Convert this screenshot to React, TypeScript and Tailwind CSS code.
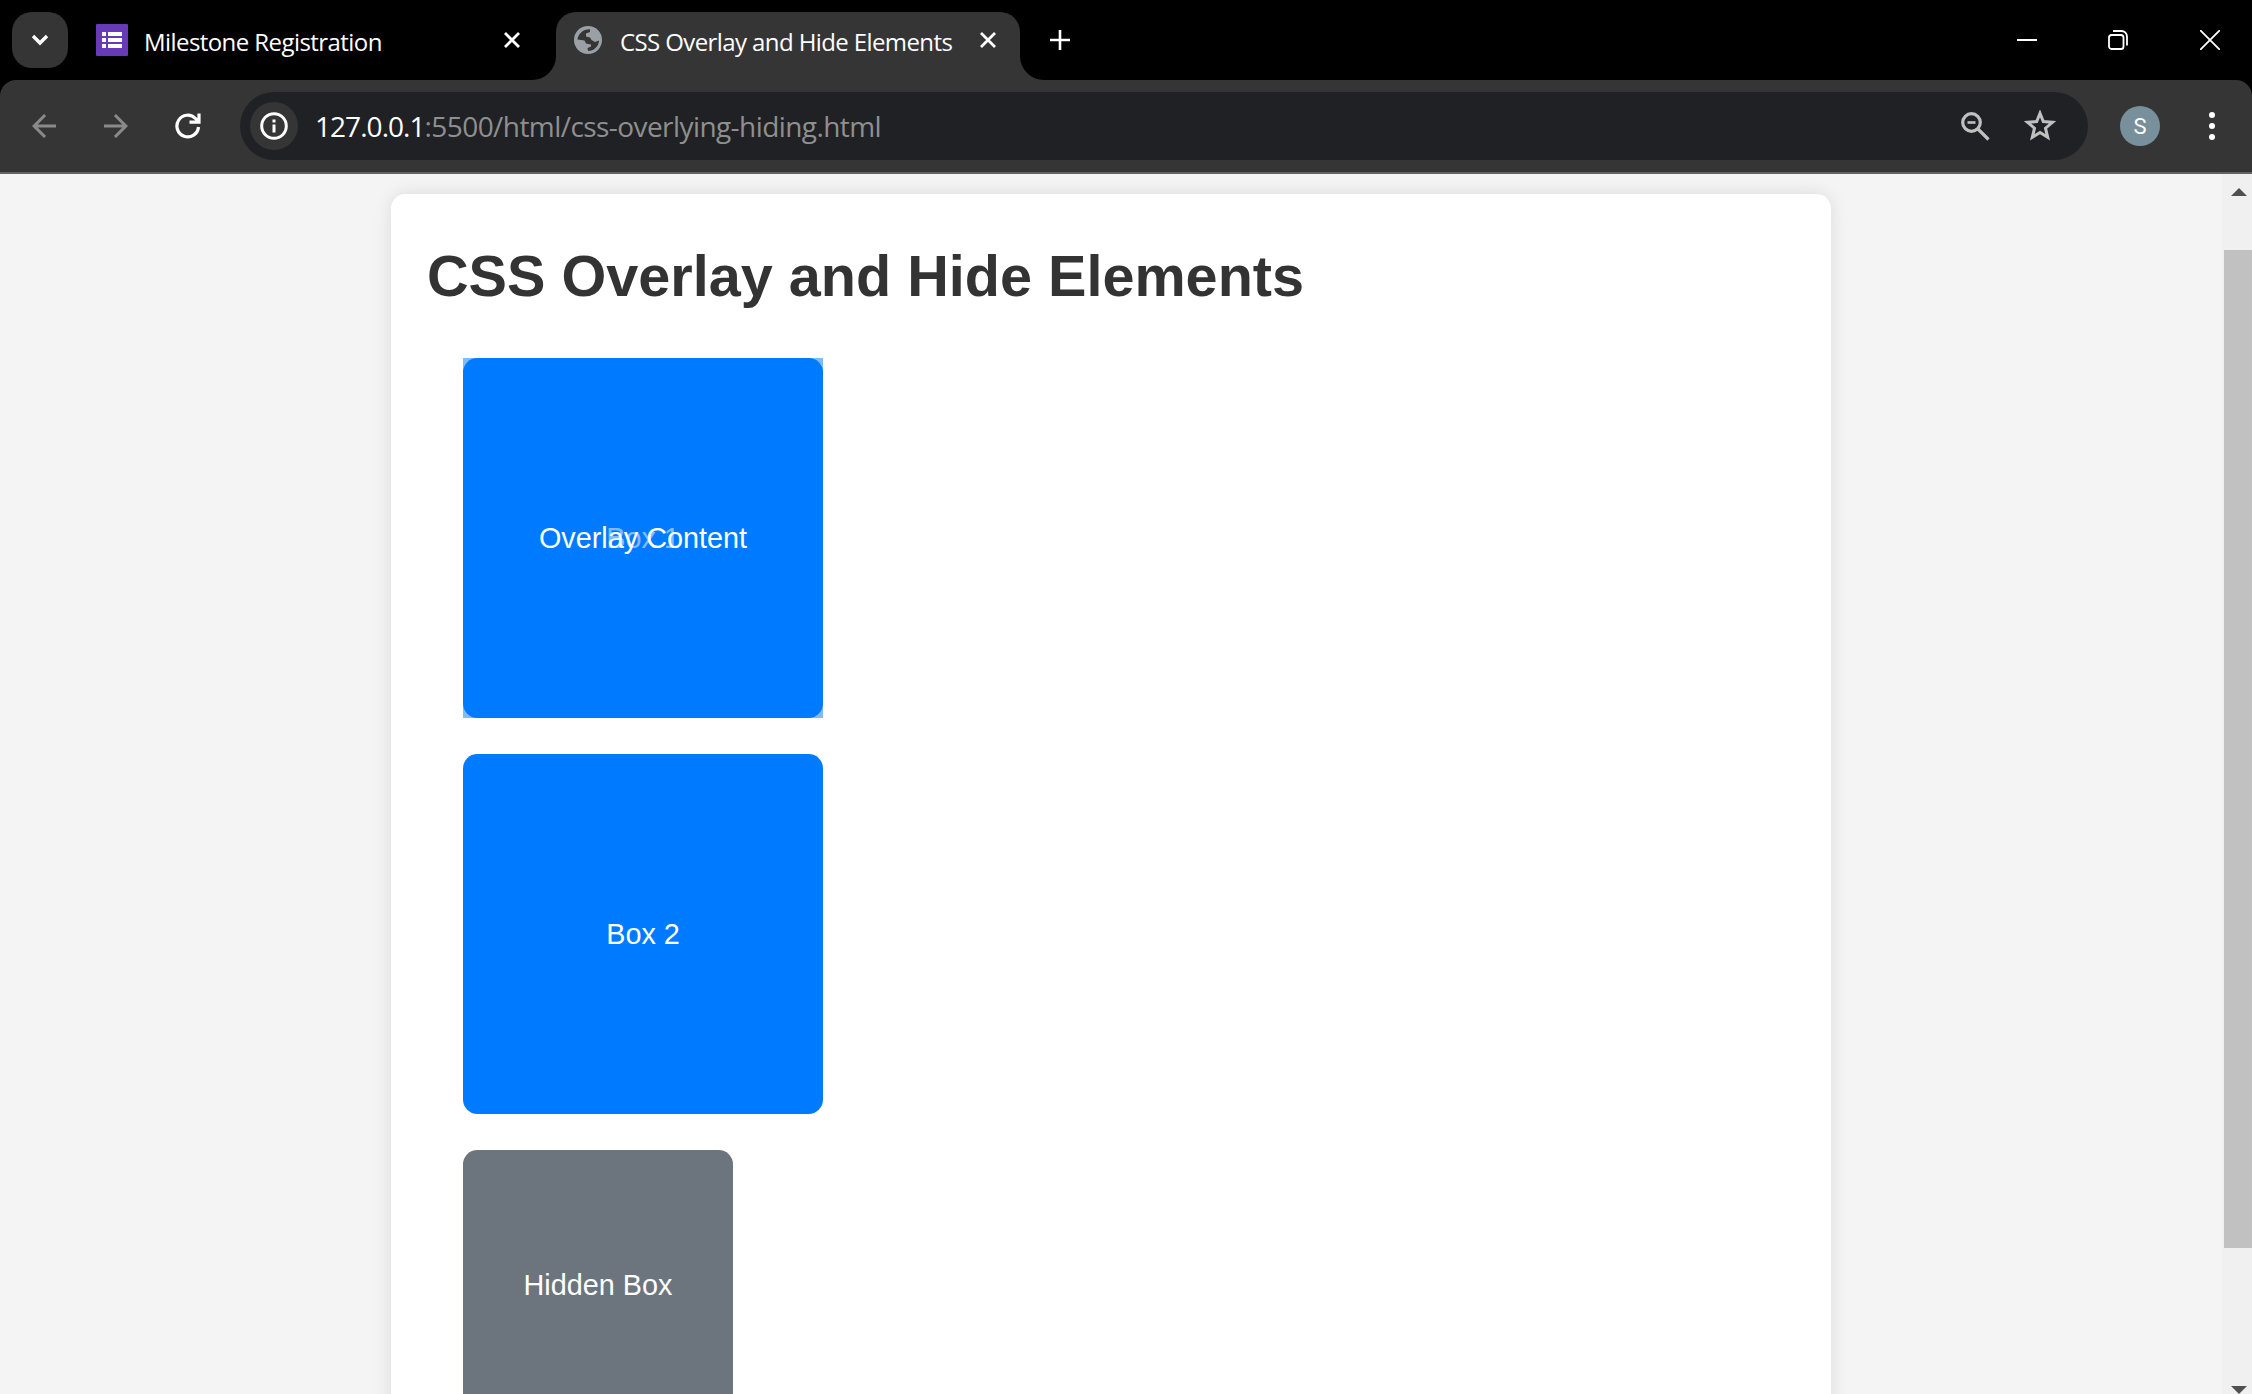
import { MdArrowBack, MdArrowForward } from "react-icons/md";

function CloseIcon() {
  return (
    <svg className="block size-4" viewBox="0 0 16 16" stroke="#fff" strokeWidth="2.8">
      <path d="M1 1 15 15M15 1 1 15" />
    </svg>
  );
}

function TabStrip() {
  return (
    <div className="flex h-20 items-start bg-black text-2xl text-white">
      <div className="mt-3 ml-3 flex size-14 items-center justify-center rounded-[20px] bg-[#353535]">
        <svg className="block h-[12px] w-[18px]" viewBox="0 0 18 12" fill="none" stroke="#fff" strokeWidth="3.4">
          <path d="M2 2 9 9 16 2" />
        </svg>
      </div>
      <div className="ml-7 flex h-20 w-[436px] items-center">
        <svg className="block size-8 shrink-0" viewBox="0 0 32 32" fill="#fff">
          <rect width="32" height="32" rx="1" fill="#673ab7" />
          <path d="M6 8h4v4H6zM12 8h14v4H12zM6 14h4v4H6zM12 14h14v4H12zM6 20h4v4H6zM12 20h14v4H12z" />
        </svg>
        <span className="mt-[3px] ml-4 w-[360px] tracking-[-0.57px] whitespace-nowrap">Milestone Registration</span>
        <CloseIcon />
      </div>
      <svg className="mt-14 block size-6" viewBox="0 0 24 24" fill="#353535">
        <path d="M24 0v24H0A24 24 0 0 0 24 0z" />
      </svg>
      <div className="mt-3 flex h-[68px] w-[464px] items-start rounded-t-[20px] bg-[#353535]">
        <svg className="mt-3.5 ml-[18px] block size-7 shrink-0" viewBox="0 0 28 28">
          <circle cx="14" cy="14" r="14" fill="#9aa0a6" />
          <path
            d="M3.500 13.500C4 8 9 3 16 3.200V6L12 7.500V10.500L16 11.500L17.500 14L21 16L25 14.500C25 20 20 25 14 25L13.500 22L17 20.500V18.500L12 17.500L10.500 14.500Z"
            fill="#353535"
          />
        </svg>
        <span className="mt-[13.5px] ml-[18px] w-[360px] tracking-[-0.6px] whitespace-nowrap">
          CSS Overlay and Hide Elements
        </span>
        <div className="mt-5">
          <CloseIcon />
        </div>
      </div>
      <svg className="mt-14 block size-6" viewBox="0 0 24 24" fill="#353535">
        <path d="M0 0v24h24A24 24 0 0 1 0 0z" />
      </svg>
      <svg className="mt-[30px] ml-1.5 block size-5" viewBox="0 0 20 20" stroke="#fff" strokeWidth="2.6">
        <path d="M10 0v20M0 10h20" />
      </svg>
      <div className="mt-[30px] mr-8 ml-auto flex">
        <svg className="block size-5" viewBox="0 0 20 20" stroke="#fff" strokeWidth="2">
          <path d="M0 10h20" />
        </svg>
        <svg className="ml-[71px] block size-5" viewBox="0 0 20 20" fill="none" stroke="#fff" strokeWidth="1.8">
          <rect x="1" y="5" width="14.5" height="14" rx="2.6" />
          <path d="M5 1h8.5a5.5 5.5 0 0 1 5.5 5.5V15.5" />
        </svg>
        <svg className="ml-[72px] block size-5" viewBox="0 0 20 20" stroke="#fff" strokeWidth="1.8">
          <path d="M0 0 20 20M20 0 0 20" />
        </svg>
      </div>
    </div>
  );
}

function Toolbar() {
  return (
    <div className="bg-black">
      <div className="flex h-[94px] items-center rounded-t-2xl border-b-2 border-[#636363] bg-[#353535]">
        <MdArrowBack className="ml-[26px] size-9 shrink-0 text-[#8a8a8a]" />
        <MdArrowForward className="ml-9 size-9 shrink-0 text-[#8a8a8a]" />
        <svg className="ml-[41px] block h-7 w-7" viewBox="0 0 28 28" fill="none" stroke="#fff" strokeWidth="3.2">
          <path d="M23.500 15A10.800 10.800 0 1 1 20.500 6.500L24 10M24 1.500V10.200H14.500" />
        </svg>
        <div className="ml-[37px] flex h-[68px] w-[1848px] items-center rounded-full bg-[#202124] pl-2.5">
          <div className="flex size-12 items-center justify-center rounded-full bg-[#353535]">
            <svg className="block size-7" viewBox="0 0 28 28" fill="none" stroke="#fff" strokeWidth="3">
              <circle cx="14" cy="14" r="12.3" />
              <path d="M14 12.5v8M14 7.500v3" />
            </svg>
          </div>
          <span className="ml-[17px] text-[28px] tracking-[-0.57px] whitespace-nowrap text-[#8f8f8f]">
            <span className="tracking-[-0.95px] text-white">127.0.0.1</span>:5500/html/css-overlying-hiding.html
          </span>
          <svg
            className="mr-[34px] ml-auto block size-[29px]"
            viewBox="0 0 29 29"
            fill="none"
            stroke="#c0c0c0"
            strokeWidth="3.2"
          >
            <circle cx="10.500" cy="10.500" r="8.800" />
            <path d="M16.500 16.500 27.500 27.500" />
            <path d="M6.500 10.500h8" strokeWidth="2.6" />
          </svg>
          <svg className="mr-8 block h-8 w-8" viewBox="0 0 32 32" fill="none" stroke="#c0c0c0" strokeWidth="3">
            <path d="M16 3.300 19.300 11.600 28.500 12.300 21.500 18.200 23.700 27.300 16 22.500 8.300 27.300 10.500 18.200 3.500 12.300 12.700 11.600Z" />
          </svg>
        </div>
        <div className="ml-8 flex size-10 items-center justify-center rounded-full bg-[#78909c] font-[Roboto] text-[22px] text-white">
          S
        </div>
        <div className="ml-[49px] flex flex-col gap-[5px]">
          <i className="size-1.5 rounded-full bg-white" />
          <i className="size-1.5 rounded-full bg-white" />
          <i className="size-1.5 rounded-full bg-white" />
        </div>
      </div>
    </div>
  );
}

function Scrollbar() {
  return (
    <div className="flex w-[30px] shrink-0 flex-col items-end bg-[#f0f0f0]">
      <svg className="mt-3.5 mr-[5px] block h-2 w-4" viewBox="0 0 16 8" fill="#505050">
        <path d="M8 0 16 8H0z" />
      </svg>
      <div className="mt-[54px] h-[998px] w-7 bg-[#c1c1c1]" />
      <svg className="mt-auto mr-[5px] block h-2 w-4" viewBox="0 0 16 8" fill="#505050">
        <path d="M0 0h16L8 8z" />
      </svg>
    </div>
  );
}

export default function App() {
  return (
    <div className="flex h-[1394px] w-[2252px] flex-col overflow-hidden font-['Open_Sans',sans-serif]">
      <TabStrip />
      <Toolbar />
      <div className="flex h-[1220px] bg-[#f4f4f4] font-['Liberation_Sans',sans-serif]">
        <main className="flex-1 overflow-hidden pt-5">
          <div className="mx-auto h-[1400px] w-[1440px] rounded-[14.4px] bg-white px-9 pt-[49px] shadow-[0_0_18px_rgba(0,0,0,0.1)]">
            <h1 className="text-[57.6px] leading-[66px] font-bold text-[#333]">CSS Overlay and Hide Elements</h1>
            <div className="mt-[49px] ml-9 flex flex-col gap-9 text-[28.8px] text-white">
              <div className="relative flex size-[360px] items-center justify-center rounded-[14.4px] bg-[#007bff] pt-0.5">
                Box 1
                <div className="absolute inset-0 flex items-center justify-center bg-[#007bff]/50 pt-0.5">
                  Overlay Content
                </div>
              </div>
              <div className="flex size-[360px] items-center justify-center rounded-[14.4px] bg-[#007bff] pt-0.5">
                Box 2
              </div>
              <div className="flex size-[270px] items-center justify-center rounded-[14.4px] bg-[#6c757d] pt-0.5">
                Hidden Box
              </div>
            </div>
          </div>
        </main>
        <Scrollbar />
      </div>
    </div>
  );
}
